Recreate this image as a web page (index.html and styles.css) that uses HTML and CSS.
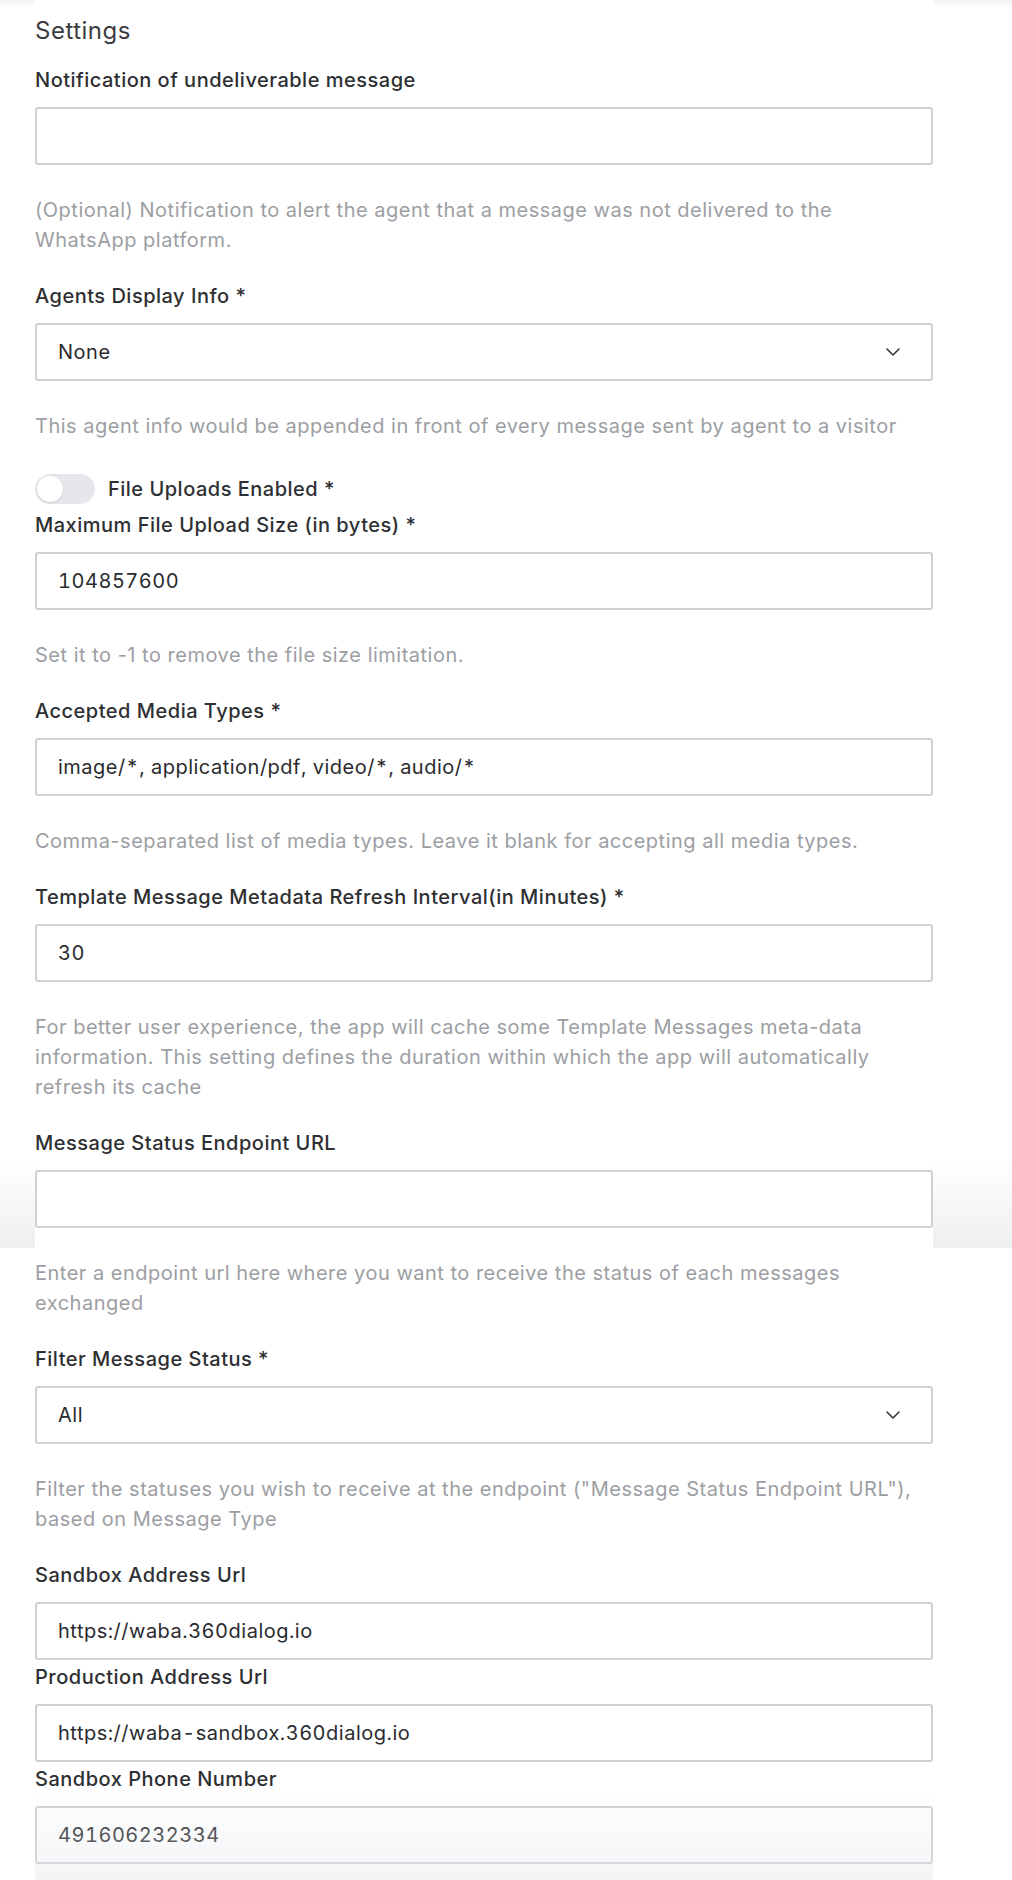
FILE: index.html
```html
<!DOCTYPE html>
<html lang="en">
<head>
<meta charset="utf-8">
<title>Settings</title>
<link rel="stylesheet" href="styles.css">
</head>
<body>
<main class="form">
  <h2 class="title">Settings</h2>

  <div class="field">
    <label class="label">Notification of undeliverable message</label>
    <input class="input" type="text" value="">
    <p class="help">(Optional) Notification to alert the agent that a message was not delivered to the WhatsApp platform.</p>
  </div>

  <div class="field">
    <label class="label">Agents Display Info *</label>
    <div class="input select">
      <span>None</span>
      <svg class="chev" width="14" height="8" viewBox="0 0 14 8"><path d="M1 1l6 6 6-6" fill="none" stroke="#333" stroke-width="1.5" stroke-linecap="round" stroke-linejoin="round"/></svg>
    </div>
    <p class="help">This agent info would be appended in front of every message sent by agent to a visitor</p>
  </div>

  <div class="toggle-row">
    <span class="toggle"><span class="knob"></span></span>
    <span class="toggle-label">File Uploads Enabled *</span>
  </div>

  <div class="field">
    <label class="label">Maximum File Upload Size (in bytes) *</label>
    <input class="input" type="text" value="104857600">
    <p class="help">Set it to -1 to remove the file size limitation.</p>
  </div>

  <div class="field">
    <label class="label">Accepted Media Types *</label>
    <input class="input" type="text" value="image/*, application/pdf, video/*, audio/*">
    <p class="help">Comma-separated list of media types. Leave it blank for accepting all media types.</p>
  </div>

  <div class="field">
    <label class="label">Template Message Metadata Refresh Interval(in Minutes) *</label>
    <input class="input" type="text" value="30">
    <p class="help">For better user experience, the app will cache some Template Messages meta-data information. This setting defines the duration within which the app will automatically refresh its cache</p>
  </div>

  <div class="field">
    <label class="label">Message Status Endpoint URL</label>
    <input class="input" type="text" value="">
    <p class="help">Enter a endpoint url here where you want to receive the status of each messages exchanged</p>
  </div>

  <div class="field">
    <label class="label">Filter Message Status *</label>
    <div class="input select">
      <span>All</span>
      <svg class="chev" width="14" height="8" viewBox="0 0 14 8"><path d="M1 1l6 6 6-6" fill="none" stroke="#333" stroke-width="1.5" stroke-linecap="round" stroke-linejoin="round"/></svg>
    </div>
    <p class="help">Filter the statuses you wish to receive at the endpoint ("Message Status Endpoint URL"), based on Message Type</p>
  </div>

  <div class="field plain">
    <label class="label">Sandbox Address Url</label>
    <input class="input" type="text" value="https://waba.360dialog.io">
  </div>

  <div class="field plain">
    <label class="label">Production Address Url</label>
    <input class="input" type="text" value="https://waba-sandbox.360dialog.io">
  </div>

  <div class="field plain">
    <label class="label">Sandbox Phone Number</label>
    <input class="input" type="text" value="491606232334">
  </div>
</main>
</body>
</html>
```

FILE: styles.css
```css
html, body {
  margin: 0;
  padding: 0;
}

body {
  width: 1012px;
  min-height: 1880px;
  font-family: Inter, "Noto Sans", "Liberation Sans", sans-serif;
  letter-spacing: 0.5px;
  color: #2f3033;
  background-color: #ffffff;
  background-image:
    linear-gradient(#f1f2f4, #ffffff),
    linear-gradient(#ffffff, #eeeff1);
  background-repeat: no-repeat;
  background-size: 100% 7px, 100% 90px;
  background-position: 0 0, 0 1158px;
}

.form {
  position: relative;
  box-sizing: border-box;
  width: 898px;
  margin-left: 35px;
  min-height: 1880px;
  padding-top: 16px;
  padding-bottom: 17px;
  background: #ffffff;
}

.form::after {
  content: "";
  position: absolute;
  left: 0;
  right: 0;
  bottom: 0;
  height: 95px;
  pointer-events: none;
  background: linear-gradient(rgba(228, 230, 235, 0), rgba(228, 230, 235, 0.45));
}

.title {
  margin: 0 0 19px;
  font-size: 24px;
  line-height: 30px;
  font-weight: 400;
  color: #3b3c3f;
}

.field {
  display: flex;
  flex-direction: column;
}

.field.plain {
  margin-bottom: 2px;
}

.label {
  font-size: 20px;
  line-height: 30px;
  font-weight: 500;
  color: #2e2f32;
  margin-bottom: 12px;
}

.input {
  box-sizing: border-box;
  width: 898px;
  height: 58px;
  margin: 0;
  padding: 0 21px;
  border: 2px solid #cfd0d2;
  border-radius: 3px;
  background: #ffffff;
  font-family: inherit;
  font-size: 20px;
  font-weight: 400;
  letter-spacing: 0.5px;
  font-variant-numeric: tabular-nums;
  color: #2a2b2e;
  outline: none;
}

.select {
  display: flex;
  align-items: center;
  justify-content: space-between;
  padding-right: 31px;
}

.chev {
  display: block;
}

.help {
  margin: 30px 0 26px;
  font-size: 20px;
  line-height: 30px;
  font-weight: 400;
  color: #9c9ea3;
}

.toggle-row {
  display: flex;
  align-items: center;
  gap: 13px;
  margin-top: 7px;
  margin-bottom: 6px;
}

.toggle {
  box-sizing: border-box;
  display: flex;
  align-items: center;
  width: 60px;
  height: 30px;
  padding: 2px;
  border-radius: 15px;
  background: #e5e7eb;
}

.knob {
  width: 26px;
  height: 26px;
  border-radius: 50%;
  background: #ffffff;
  box-shadow: 0 1px 2px rgba(0, 0, 0, 0.12);
}

.toggle-label {
  font-size: 20px;
  line-height: 30px;
  font-weight: 500;
  color: #2e2f32;
}
```
